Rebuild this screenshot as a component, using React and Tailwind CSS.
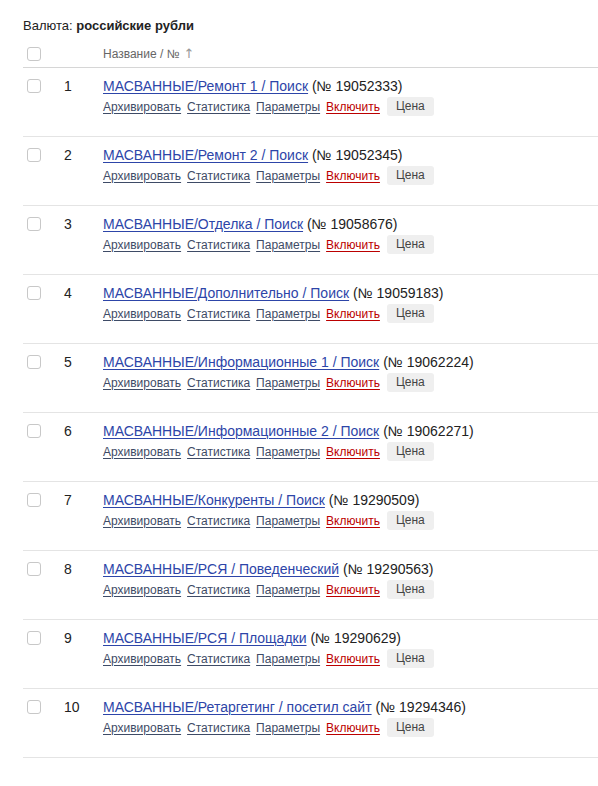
import React from 'react';

const campaigns = [
  { id: 19052333, name: 'МАСВАННЫЕ/Ремонт 1 / Поиск' },
  { id: 19052345, name: 'МАСВАННЫЕ/Ремонт 2 / Поиск' },
  { id: 19058676, name: 'МАСВАННЫЕ/Отделка / Поиск' },
  { id: 19059183, name: 'МАСВАННЫЕ/Дополнительно / Поиск' },
  { id: 19062224, name: 'МАСВАННЫЕ/Информационные 1 / Поиск' },
  { id: 19062271, name: 'МАСВАННЫЕ/Информационные 2 / Поиск' },
  { id: 19290509, name: 'МАСВАННЫЕ/Конкуренты / Поиск' },
  { id: 19290563, name: 'МАСВАННЫЕ/РСЯ / Поведенческий' },
  { id: 19290629, name: 'МАСВАННЫЕ/РСЯ / Площадки' },
  { id: 19294346, name: 'МАСВАННЫЕ/Ретаргетинг / посетил сайт' },
];

const Checkbox = () => (
  <span className="block w-[14px] h-[14px] rounded-[3px] border border-[#c8c8c8] bg-white" />
);

const ActionLink = ({ children, red }) => (
  <a
    href="#"
    className={
      'underline underline-offset-2 decoration-1 ' +
      (red ? 'text-[#bb0000]' : 'text-[#3e4b66]')
    }
  >
    {children}
  </a>
);

const CampaignRow = ({ index, id, name }) => (
  <div className="flex h-[69px] border-b border-[#e4e4e4] pt-[11px] pl-[4px]">
    <div className="w-[37px] shrink-0">
      <Checkbox />
    </div>
    <div className="w-[39px] shrink-0 text-[14px] leading-[14px] text-[#222]">{index}</div>
    <div className="flex flex-col">
      <div className="text-[14px] leading-[14px] text-[#222]">
        <a href="#" className="text-[#2d45a8] underline underline-offset-2 decoration-1">
          {name}
        </a>{' '}
        (№ {id})
      </div>
      <div className="flex items-center gap-[6px] mt-[4px] text-[12px]">
        <ActionLink>Архивировать</ActionLink>
        <ActionLink>Статистика</ActionLink>
        <ActionLink>Параметры</ActionLink>
        <ActionLink red>Включить</ActionLink>
        <button className="ml-[1px] h-[19px] px-[9px] rounded-[3px] bg-[#efefef] text-[12px] text-[#444] leading-[19px]">
          Цена
        </button>
      </div>
    </div>
  </div>
);

export default function App() {
  return (
    <div className="w-[598px] h-[786px] bg-white font-['Liberation_Sans',Arial,sans-serif] text-[#222]">
      <div className="pl-[23px] pt-[18px]">
        <div className="text-[13px] leading-[15px]">
          Валюта: <b className="font-bold">российские рубли</b>
        </div>
        {/* table header */}
        <div className="flex items-center h-[28px] mt-[7px] pl-[4px] border-b border-[#d6d6d6]">
          <div className="w-[76px] shrink-0">
            <Checkbox />
          </div>
          <div className="flex items-center text-[12px] text-[#666]">
            Название / №
            <span className="ml-[4px] font-['DejaVu_Sans',sans-serif] text-[13px] leading-[12px] text-[#999]">↑</span>
          </div>
        </div>
        {campaigns.map((c, i) => (
          <CampaignRow key={c.id} index={i + 1} id={c.id} name={c.name} />
        ))}
      </div>
    </div>
  );
}
